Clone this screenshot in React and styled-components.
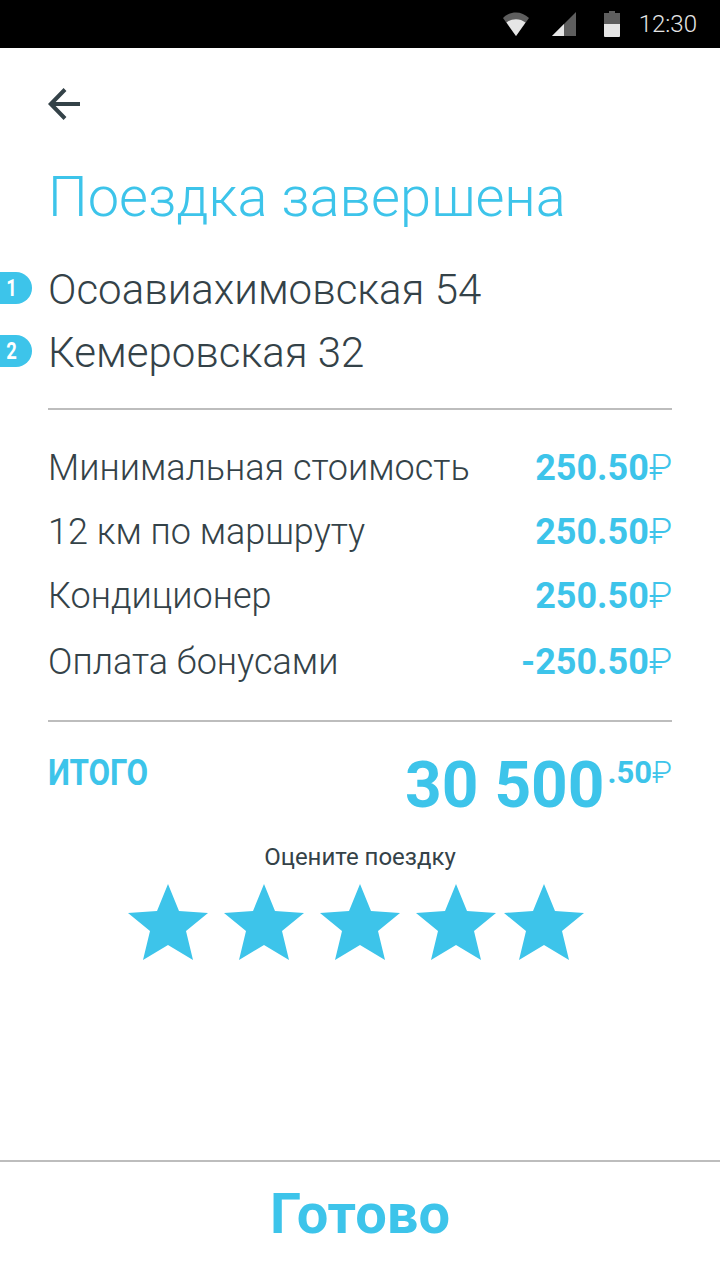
import React from 'react'
import styled, { createGlobalStyle } from 'styled-components'

const BLUE = '#3dc4ea'
const DARK = '#344248'

const GlobalStyle = createGlobalStyle`
  html, body {
    margin: 0;
    padding: 0;
    background: #fff;
  }
  body {
    font-family: Roboto, "Noto Sans", sans-serif;
  }
  * {
    box-sizing: border-box;
  }
`

const Screen = styled.div`
  width: 720px;
  height: 1280px;
  display: flex;
  flex-direction: column;
  background: #fff;
  overflow: hidden;
`

const StatusBar = styled.div`
  flex: 0 0 48px;
  display: flex;
  align-items: center;
  justify-content: flex-end;
  background: #000;
  color: #e6e6e6;
  padding-right: 23px;
`

const StatusIcon = styled.svg`
  display: block;
  margin-right: ${({ gap }) => gap}px;
`

const Clock = styled.span`
  font-size: 24px;
  font-weight: 300;
  line-height: 48px;
`

const Content = styled.div`
  flex: 1 1 0;
  display: flex;
  flex-direction: column;
  padding: 0 48px;
`

const BackButton = styled.div`
  height: 32px;
  margin-top: 40px;
  display: flex;
  align-items: center;
`

const Title = styled.h1`
  margin: 44px 0 0;
  font-size: 56px;
  font-weight: 300;
  line-height: 66px;
  color: ${BLUE};
`

const Addresses = styled.div`
  margin: 35px 0 0 -48px;
  display: flex;
  flex-direction: column;
  gap: 15px;
  padding-bottom: 32px;
`

const Address = styled.div`
  height: 48px;
  display: flex;
  align-items: center;
  gap: 16px;
  font-size: 42px;
  font-weight: 300;
  color: ${DARK};
`

const Badge = styled.span`
  flex: 0 0 32px;
  height: 32px;
  margin-top: -2px;
  padding-right: 8px;
  display: flex;
  align-items: center;
  justify-content: center;
  border-radius: 0 16px 16px 0;
  background: ${BLUE};
  color: #fff;
  font-size: 23px;
  font-weight: 700;
`

const BadgeNumber = styled.span`
  display: inline-block;
  transform: scaleX(0.8);
`

const Rule = styled.div`
  height: 2px;
  background: #bdbdbd;
`

const Prices = styled.div`
  display: flex;
  flex-direction: column;
  gap: 16px;
  padding: 34px 0 34px;
`

const PriceRow = styled.div`
  height: 48px;
  display: flex;
  align-items: center;
  justify-content: space-between;
  font-size: 36px;
  font-weight: 300;
  color: ${DARK};

  &:last-child {
    margin-top: 2px;
  }
`

const Amount = styled.span`
  font-weight: 700;
  color: ${BLUE};
`

const Ruble = styled.span`
  font-weight: 300;
`

const TotalRow = styled.div`
  display: flex;
  align-items: flex-start;
  justify-content: space-between;
  margin-top: 21px;
  height: 70px;
`

const TotalLabel = styled.span`
  font-size: 36px;
  font-weight: 700;
  line-height: 60px;
  color: ${BLUE};
  display: inline-block;
  transform: scaleX(0.87);
  transform-origin: left center;
`

const TotalAmount = styled.span`
  display: flex;
  align-items: flex-start;
  color: ${BLUE};
  font-size: 64px;
  font-weight: 700;
  line-height: 86px;
`

const Cents = styled.span`
  font-size: 31px;
  line-height: 60px;
  margin-left: 3px;
`

const RateLabel = styled.div`
  margin-top: 28px;
  text-align: center;
  font-size: 24px;
  line-height: 32px;
  color: ${DARK};
`

const Stars = styled.div`
  margin: 11px 0 0 -8px;
  display: flex;
  justify-content: center;
  gap: 16px;
`

const Star = styled.svg`
  display: block;
  fill: ${BLUE};
  margin-left: ${({ tight }) => (tight ? '-8px' : '0')};
`

const Footer = styled.div`
  flex: 0 0 120px;
  display: flex;
  align-items: center;
  justify-content: center;
  padding-bottom: 14px;
  border-top: 2px solid #bdbdbd;
  color: ${BLUE};
  font-size: 56px;
  font-weight: 700;
`

const rows = [
  ['Минимальная стоимость', '250.50'],
  ['12 км по маршруту', '250.50'],
  ['Кондиционер', '250.50'],
  ['Оплата бонусами', '-250.50']
]

const App = () => (
  <Screen>
    <GlobalStyle />
    <StatusBar>
      <StatusIcon gap={23} width="26" height="24" viewBox="0 0 26 24">
        <path d="M0 6C7.500-1.500 18.500-1.500 26 6L13 24Z" fill="#5e5e5e" />
        <path d="M3.500 10.500C9 6 17 6 22.500 10.500L13 24Z" fill="#e6e6e6" />
      </StatusIcon>
      <StatusIcon gap={28} width="24" height="24" viewBox="0 0 24 24">
        <path d="M0 24L24 0V24Z" fill="#5e5e5e" />
        <path d="M0 24L12 12V24Z" fill="#e6e6e6" />
      </StatusIcon>
      <StatusIcon gap={19} width="16" height="26" viewBox="0 0 16 26">
        <path d="M5 0H11V2H16V13H0V2H5Z" fill="#5e5e5e" />
        <path d="M0 13H16V25a1 1 0 0 1-1 1H1a1 1 0 0 1-1-1Z" fill="#e6e6e6" />
      </StatusIcon>
      <Clock>12:30</Clock>
    </StatusBar>
    <Content>
      <BackButton>
        <svg width="32" height="32" viewBox="0 0 32 32" fill="none" stroke={DARK} strokeWidth="4">
          <path d="M32 16H3" />
          <path d="M17 1.500L2.800 16L17 30.500" />
        </svg>
      </BackButton>
      <Title>Поездка завершена</Title>
      <Addresses>
        <Address><Badge><BadgeNumber>1</BadgeNumber></Badge>Осоавиахимовская 54</Address>
        <Address><Badge><BadgeNumber>2</BadgeNumber></Badge>Кемеровская 32</Address>
      </Addresses>
      <Rule />
      <Prices>
        {rows.map(([label, value]) => (
          <PriceRow key={label}>
            {label}
            <Amount>{value}<Ruble>₽</Ruble></Amount>
          </PriceRow>
        ))}
      </Prices>
      <Rule />
      <TotalRow>
        <TotalLabel>ИТОГО</TotalLabel>
        <TotalAmount>30 500<Cents>.50<Ruble>₽</Ruble></Cents></TotalAmount>
      </TotalRow>
      <RateLabel>Оцените поездку</RateLabel>
      <Stars>
        {[0, 1, 2, 3, 4].map((i) => (
          <Star key={i} tight={i === 4} width="80" height="76" viewBox="0 0 80 76">
            <path d="M40 0L51 27L80 29L58 47L65 76L40 61L15 76L22 47L0 29L29 27Z" />
          </Star>
        ))}
      </Stars>
    </Content>
    <Footer>Готово</Footer>
  </Screen>
)

export default App
